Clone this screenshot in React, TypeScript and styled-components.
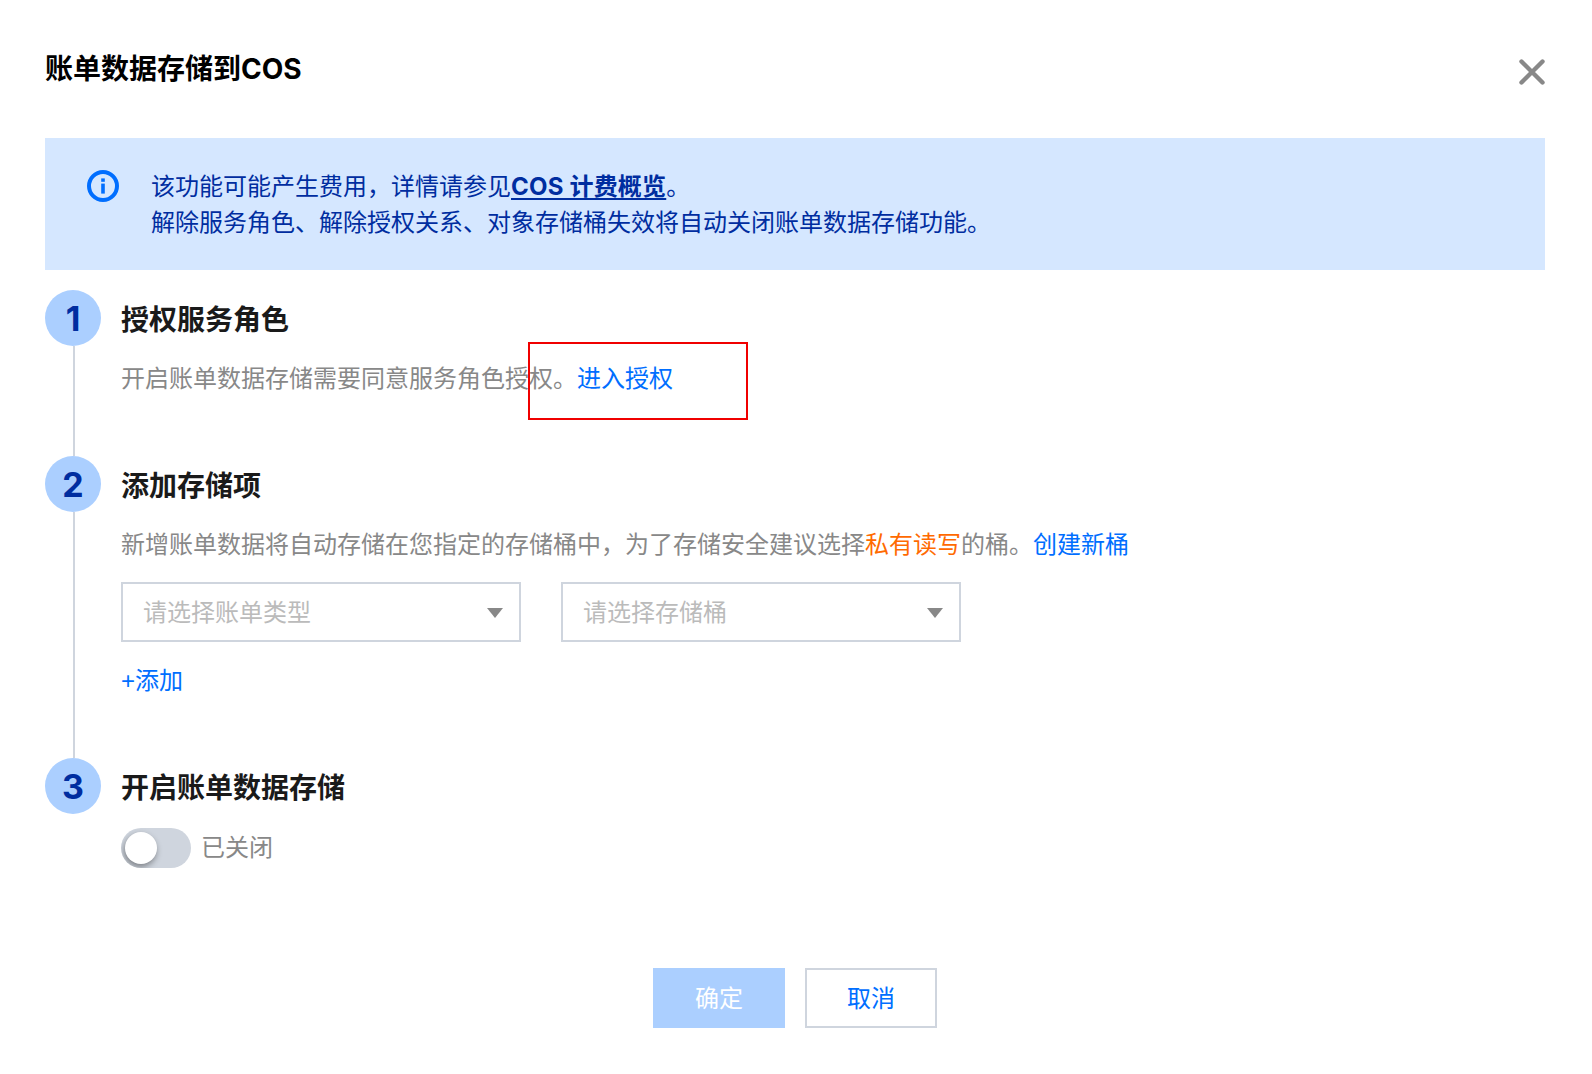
import React from "react";
import styled, { createGlobalStyle } from "styled-components";

const Global = createGlobalStyle`
  html, body { margin: 0; padding: 0; background: #fff; }
  body { font-family: Inter, "Noto Sans CJK SC", sans-serif; }
  * { box-sizing: border-box; }
`;

const Page = styled.div`
  position: relative;
  width: 1592px;
  height: 1074px;
  padding: 0 47px 0 45px;
  overflow: hidden;
`;

const Header = styled.header`
  display: flex;
  justify-content: space-between;
  height: 138px;
  padding-top: 49px;
`;

const DialogTitle = styled.h1`
  margin: 0;
  font-size: 28px;
  line-height: 40px;
  font-weight: 700;
  color: #000;
`;

const CloseButton = styled.button`
  width: 28px;
  height: 28px;
  margin-top: 9px;
  margin-right: -1px;
  padding: 0;
  border: 0;
  background: none;
  display: block;
`;

const Alert = styled.div`
  display: flex;
  gap: 32px;
  height: 132px;
  padding: 31px 42px;
  background: #d5e7ff;
  color: #002da0;
  font-size: 24px;
  line-height: 36px;
`;

const AlertIcon = styled.svg`
  flex: none;
  width: 32px;
  height: 32px;
  margin-top: 1px;
`;

const AlertLink = styled.a`
  font-weight: 700;
  letter-spacing: 0.2px;
  text-decoration: underline;
  text-underline-offset: 3px;
  text-decoration-thickness: 2px;
`;

const Steps = styled.div`
  margin-top: 20px;
`;

const Step = styled.section<{ $height?: number }>`
  display: grid;
  grid-template-columns: 56px 1fr;
  column-gap: 20px;
  height: ${(p) => (p.$height ? `${p.$height}px` : "auto")};
`;

const Rail = styled.div`
  display: flex;
  flex-direction: column;
  align-items: center;
`;

const Circle = styled.div`
  flex: none;
  width: 56px;
  height: 56px;
  padding-top: 1px;
  border-radius: 50%;
  background: #abcfff;
  color: #002da0;
  font-size: 34px;
  font-weight: 700;
  line-height: 56px;
  text-align: center;
`;

const RailLine = styled.div`
  flex: 1;
  width: 2px;
  margin-left: 2px;
  background: #cfd5de;
`;

const StepTitle = styled.h2`
  margin: 0;
  padding-top: 2px;
  height: 56px;
  font-size: 28px;
  line-height: 56px;
  font-weight: 700;
  color: #1a1a1a;
`;

const Desc = styled.p`
  margin: 15px 0 0;
  font-size: 24px;
  line-height: 36px;
  color: #888;
`;

const BlueLink = styled.a`
  color: #006eff;
`;

const Warn = styled.span`
  color: #ff6a00;
`;

const SelectRow = styled.div`
  display: flex;
  gap: 40px;
  margin-top: 19px;
`;

const SelectBox = styled.div`
  display: flex;
  align-items: center;
  justify-content: space-between;
  width: 400px;
  height: 60px;
  padding: 0 16px 4px 20px;
  border: 2px solid #cfd5de;
  font-size: 24px;
  color: #bbb;
`;

const Caret = styled.span`
  width: 0;
  height: 0;
  margin-top: 5px;
  border-left: 8px solid transparent;
  border-right: 8px solid transparent;
  border-top: 10px solid #888;
`;

const AddLink = styled.a`
  display: block;
  margin-top: 21px;
  font-family: "Liberation Sans", "Noto Sans CJK SC", sans-serif;
  font-size: 24px;
  line-height: 36px;
  color: #006eff;
`;

const SwitchRow = styled.div`
  display: flex;
  align-items: center;
  gap: 10px;
  margin-top: 14px;
`;

const Track = styled.div`
  display: flex;
  align-items: center;
  width: 70px;
  height: 40px;
  padding-left: 4px;
  border-radius: 20px;
  background: #cfd5de;
  overflow: hidden;
`;

const Knob = styled.div`
  width: 32px;
  height: 32px;
  border-radius: 50%;
  background: #fff;
  box-shadow: -1px 3px 6px rgba(0, 0, 0, 0.4);
`;

const SwitchLabel = styled.span`
  font-size: 24px;
  line-height: 36px;
  color: #888;
`;

const Footer = styled.footer`
  position: absolute;
  left: 0;
  right: 0;
  top: 968px;
  display: flex;
  justify-content: center;
  gap: 20px;
  padding-right: 2px;
`;

const Button = styled.button<{ $primary?: boolean }>`
  width: 132px;
  height: 60px;
  padding: 0 0 3px;
  font: inherit;
  font-size: 24px;
  background: ${(p) => (p.$primary ? "#abcfff" : "#fff")};
  color: ${(p) => (p.$primary ? "#fff" : "#006eff")};
  border: ${(p) => (p.$primary ? "0" : "2px solid #cfd5de")};
`;

const Highlight = styled.div`
  position: absolute;
  left: 528px;
  top: 342px;
  width: 220px;
  height: 78px;
  border: 2px solid #f00000;
  pointer-events: none;
`;

export default function App() {
  return (
    <Page>
      <Global />
      <Header>
        <DialogTitle>账单数据存储到COS</DialogTitle>
        <CloseButton aria-label="关闭">
          <svg width="28" height="28" viewBox="0 0 28 28">
            <path d="M3.5 3.5 L24.5 24.5 M24.5 3.5 L3.5 24.5" stroke="#888" strokeWidth="4.4" strokeLinecap="round" />
          </svg>
        </CloseButton>
      </Header>
      <Alert>
        <AlertIcon viewBox="0 0 32 32">
          <circle cx="16" cy="16" r="14" fill="none" stroke="#006eff" strokeWidth="4" />
          <rect x="14.2" y="8.4" width="3.6" height="3.4" fill="#006eff" />
          <rect x="14.2" y="13.6" width="3.6" height="10" fill="#006eff" />
        </AlertIcon>
        <div>
          该功能可能产生费用，详情请参见<AlertLink>COS 计费概览</AlertLink>。
          <br />
          解除服务角色、解除授权关系、对象存储桶失效将自动关闭账单数据存储功能。
        </div>
      </Alert>
      <Steps>
        <Step $height={166}>
          <Rail>
            <Circle>1</Circle>
            <RailLine />
          </Rail>
          <div>
            <StepTitle>授权服务角色</StepTitle>
            <Desc>
              开启账单数据存储需要同意服务角色授权。<BlueLink>进入授权</BlueLink>
            </Desc>
          </div>
        </Step>
        <Step $height={302}>
          <Rail>
            <Circle>2</Circle>
            <RailLine />
          </Rail>
          <div>
            <StepTitle>添加存储项</StepTitle>
            <Desc>
              新增账单数据将自动存储在您指定的存储桶中，为了存储安全建议选择<Warn>私有读写</Warn>的桶。
              <BlueLink>创建新桶</BlueLink>
            </Desc>
            <SelectRow>
              <SelectBox>
                请选择账单类型
                <Caret />
              </SelectBox>
              <SelectBox>
                请选择存储桶
                <Caret />
              </SelectBox>
            </SelectRow>
            <AddLink>+添加</AddLink>
          </div>
        </Step>
        <Step>
          <Rail>
            <Circle>3</Circle>
          </Rail>
          <div>
            <StepTitle>开启账单数据存储</StepTitle>
            <SwitchRow>
              <Track>
                <Knob />
              </Track>
              <SwitchLabel>已关闭</SwitchLabel>
            </SwitchRow>
          </div>
        </Step>
      </Steps>
      <Footer>
        <Button $primary>确定</Button>
        <Button>取消</Button>
      </Footer>
      <Highlight />
    </Page>
  );
}
